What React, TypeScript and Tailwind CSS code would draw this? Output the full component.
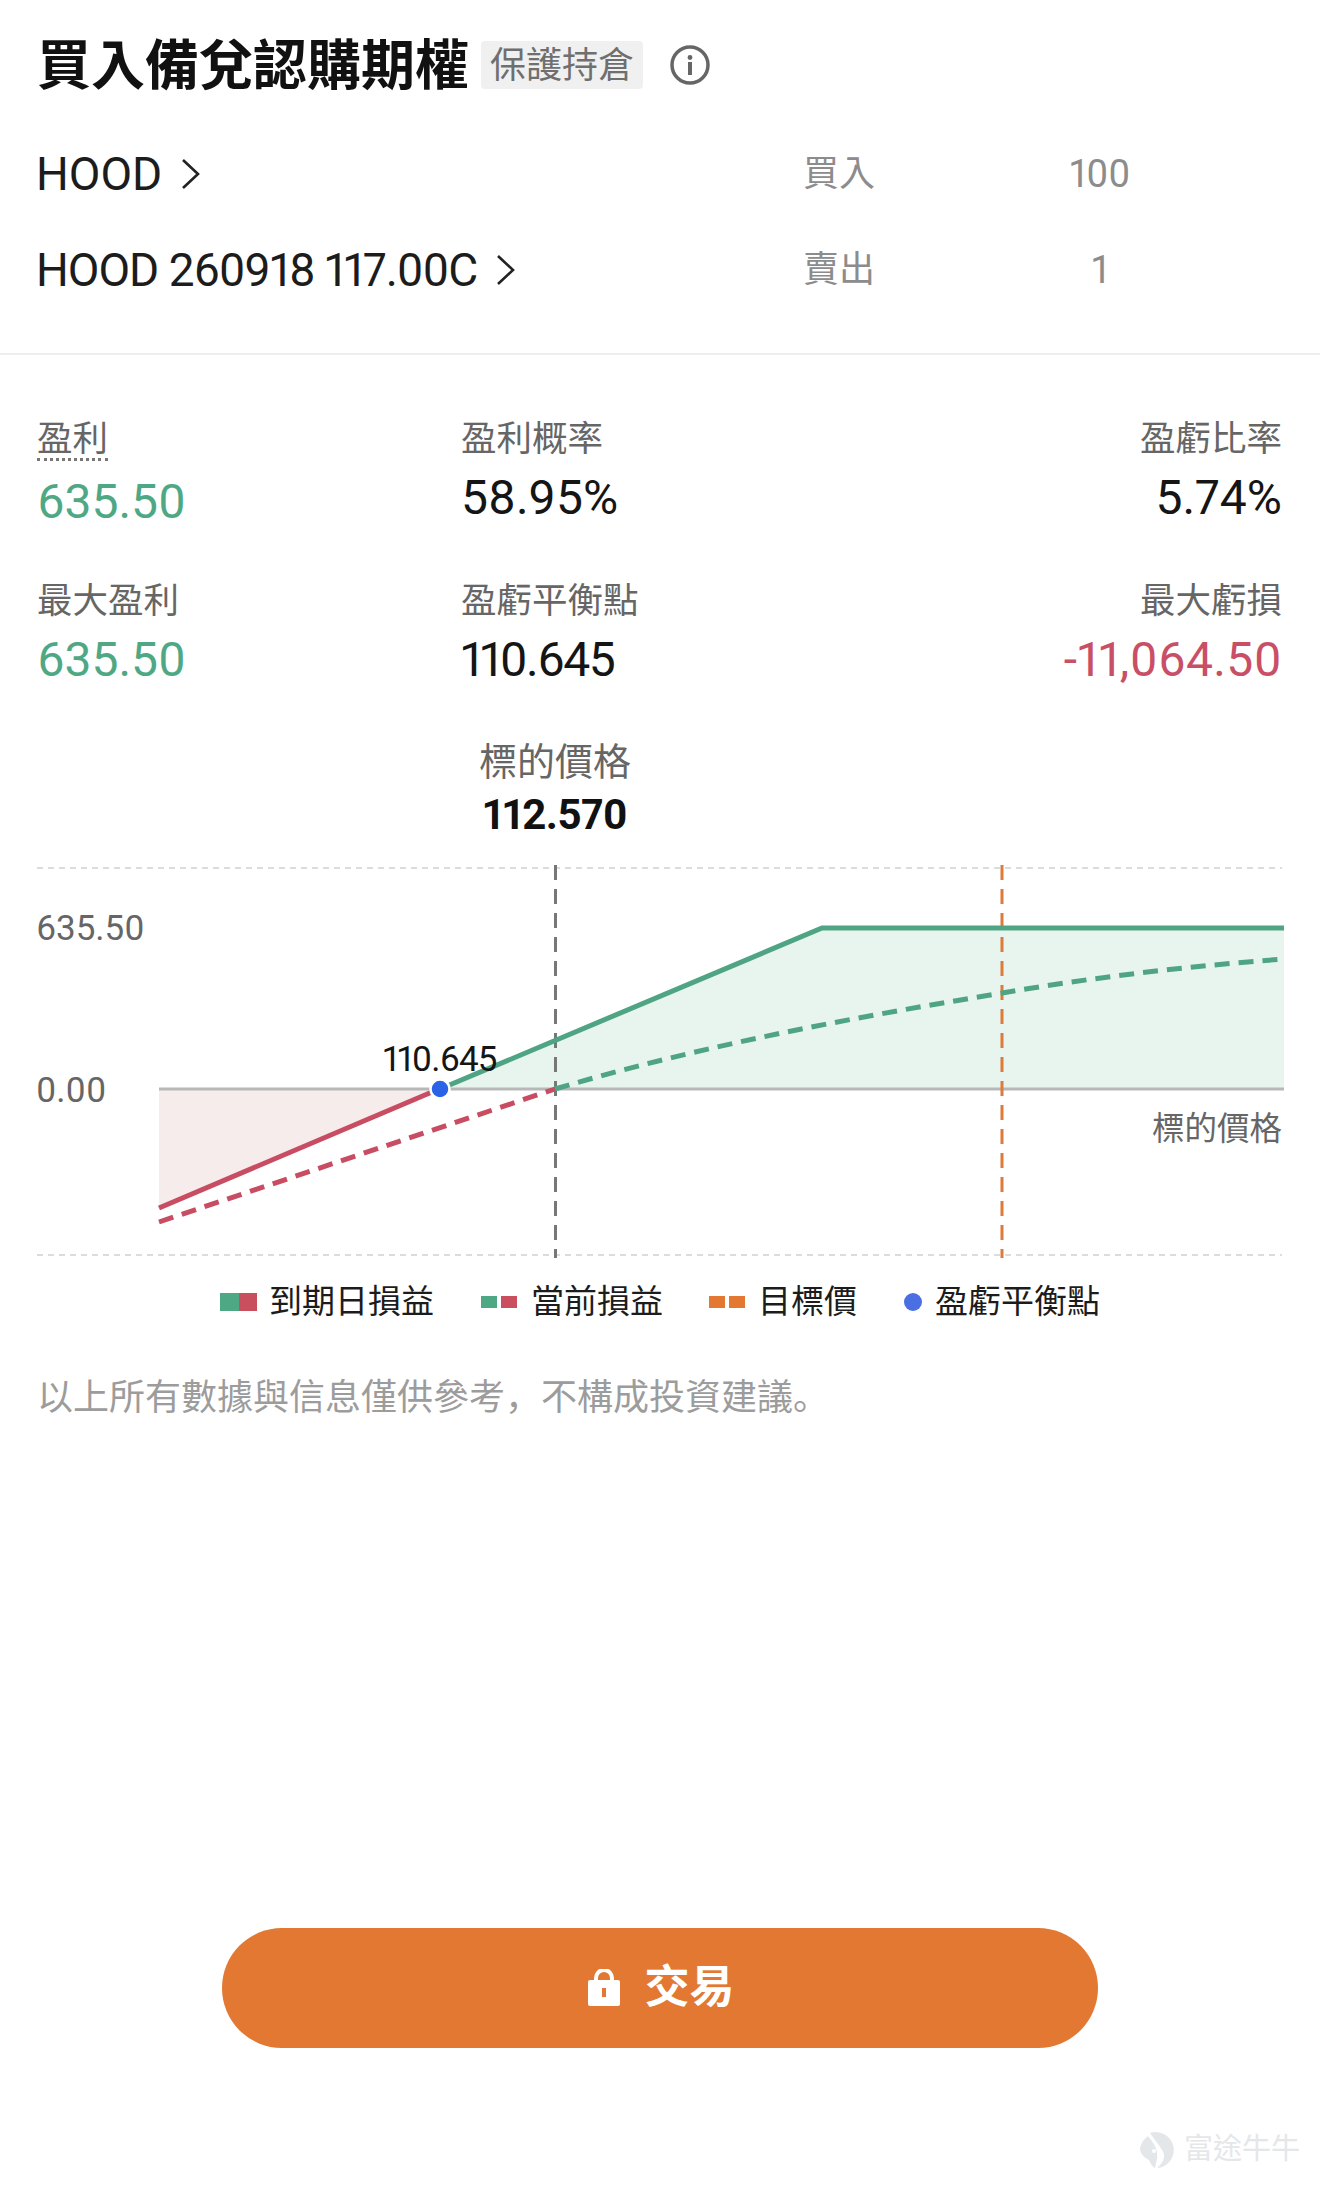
const FONT = "font-['Roboto','Noto_Sans_CJK_TC',sans-serif] proportional-nums";

function Chevron({ className }: { className: string }) {
  return (
    <svg viewBox="0 0 20 32" className={className} fill="none" stroke="#222" strokeWidth="2.6">
      <path d="M2 2l15 14L2 30" />
    </svg>
  );
}

function PositionRow({ name, side, qty, tight }: { name: string; side: string; qty: string; tight?: boolean }) {
  return (
    <div className="flex h-[48px] items-center">
      <div className="flex w-[766px] items-center">
        <span className={`-ml-px text-[46px] leading-[48px] text-[#1c1c1c] ${tight ? 'tracking-[-1px]' : ''}`}>{name}</span>
        <Chevron className="ml-[19px] h-[32px] w-[20px]" />
      </div>
      <span className="w-[200px] text-[36px] leading-[48px] text-[#8c8c8c]">{side}</span>
      <span className="w-[194px] text-center text-[38px] leading-[48px] text-[#8c8c8c]">{qty}</span>
    </div>
  );
}

interface StatProps {
  label: string;
  value: string;
  color?: string;
  align?: string;
  dotted?: boolean;
  gap?: string;
  tracking?: string;
}

function Stat({ label, value, color = 'text-[#151515]', align = 'text-left', dotted, gap = 'mt-[19px]', tracking = '' }: StatProps) {
  return (
    <div className={align}>
      <div className="h-[40px] text-[35.5px] leading-[40px] text-[#666]">
        {dotted ? (
          <span className="inline-block h-[42px] border-b-[3px] border-dotted border-[#777]">{label}</span>
        ) : (
          label
        )}
      </div>
      <div className={`${gap} h-[40px] text-[48px] leading-[40px] ${color} ${tracking}`}>{value}</div>
    </div>
  );
}

function Chart() {
  return (
    <div className="relative h-[400px]">
      <svg viewBox="0 860 1320 400" className="block h-[400px] w-[1320px]" fill="none">
        <path d="M159 1089H440L159 1208Z" fill="#f6ecec" />
        <path d="M440 1089L822 928H1284V1089Z" fill="#e8f5ef" />
        <path d="M37 868H1282M37 1255H1282" stroke="#dcdcdc" strokeWidth="2" strokeDasharray="6 5" />
        <path d="M159 1089H1284" stroke="#b8b8b8" strokeWidth="3" />
        <path d="M555.5 865V1258" stroke="#777" strokeWidth="3" strokeDasharray="15 9" />
        <path d="M1002 865V1258" stroke="#dd7b3a" strokeWidth="3" strokeDasharray="15 9" />
        <path d="M159 1208L432 1092" stroke="#c84d63" strokeWidth="5" />
        <path d="M159 1222L555 1089" stroke="#c84d63" strokeWidth="5" strokeDasharray="15 9" />
        <path d="M440 1089L822 928H1284" stroke="#4fa583" strokeWidth="5" />
        <path d="M555 1089C700 1046 850 1018 1002 993C1095 977 1190 966 1284 959" stroke="#4fa583" strokeWidth="5" strokeDasharray="15 9" />
        <circle cx="440" cy="1089" r="9.5" fill="#2a62e8" stroke="#fff" strokeWidth="2.5" />
      </svg>
      <span className="absolute left-[36px] top-[49px] text-[35px] leading-[40px] text-[#666]">635.50</span>
      <span className="absolute left-[36px] top-[211px] text-[35px] leading-[40px] text-[#666]">0.00</span>
      <span className="absolute left-[383px] top-[180px] text-[35px] leading-[40px] tracking-[-0.8px] text-[#151515]">110.645</span>
      <span className="absolute right-[38px] top-[249px] text-[32.5px] leading-[40px] text-[#666]">標的價格</span>
    </div>
  );
}

function LegendItem({ swatch, label, className }: { swatch: React.ReactNode; label: string; className: string }) {
  return (
    <div className={`flex items-center ${className}`}>
      {swatch}
      <span className="text-[33px] leading-[40px] text-[#1c1c1c]">{label}</span>
    </div>
  );
}

export default function App() {
  return (
    <div className={`relative h-[2186px] w-[1320px] overflow-hidden bg-white ${FONT}`}>
      <header className="border-b-2 border-[#eee] px-[37px] pb-[59px] pt-[39px]">
        <div className="mb-[59px] flex h-[52px] items-center">
          <h1 className="mt-[4px] text-[54px] font-bold leading-[52px] text-[#111]">買入備兌認購期權</h1>
          <span className="ml-[12px] flex h-[48px] w-[162px] items-center justify-center rounded-[4px] bg-[#f0f0f0] pt-[2px] text-[36px] leading-[48px] text-[#6f6f6f]">
            保護持倉
          </span>
          <svg viewBox="0 0 40 40" className="ml-[27px] h-[40px] w-[40px]" fill="none">
            <circle cx="20" cy="20" r="18" stroke="#666" strokeWidth="3.5" />
            <circle cx="20" cy="12.5" r="2.4" fill="#666" />
            <rect x="18" y="17" width="4" height="13" fill="#666" />
          </svg>
        </div>
        <PositionRow name="HOOD" side="買入" qty="100" />
        <div className="mt-[48px]">
          <PositionRow name="HOOD 260918 117.00C" side="賣出" qty="1" tight />
        </div>
      </header>

      <section className="mt-[64px] grid grid-cols-[424px_1fr_auto] gap-y-[59px] pl-[37px] pr-[38px]">
        <Stat label="盈利" value="635.50" color="text-[#4fa884]" dotted gap="mt-[23px]" />
        <Stat label="盈利概率" value="58.95%" />
        <Stat label="盈虧比率" value="5.74%" align="text-right" />
        <Stat label="最大盈利" value="635.50" color="text-[#4fa884]" />
        <Stat label="盈虧平衡點" value="110.645" tracking="tracking-[-1.5px]" />
        <Stat label="最大虧損" value="-11,064.50" color="text-[#c94f66]" align="text-right" tracking="tracking-[0.4px]" />
      </section>

      <div className="ml-[405px] mt-[60px] w-[300px] text-center">
        <div className="h-[44px] text-[38px] leading-[44px] text-[#666]">標的價格</div>
        <div className="mt-[9px] h-[44px] text-[42px] font-bold leading-[44px] tracking-[-0.5px] text-[#111]">112.570</div>
      </div>

      <div className="mt-[23px]">
        <Chart />
      </div>

      <div className="mt-[22px] flex h-[40px] items-center pl-[220px]">
        <LegendItem
          className="w-[261px]"
          label="到期日損益"
          swatch={
            <span className="mr-[12px] flex h-[18px] w-[37px]">
              <i className="w-1/2 bg-[#4fa884]" />
              <i className="w-1/2 bg-[#c94f5f]" />
            </span>
          }
        />
        <LegendItem
          className="w-[228px]"
          label="當前損益"
          swatch={
            <span className="mr-[14px] flex h-[12px] w-[36px] justify-between">
              <i className="w-[16px] bg-[#4fa884]" />
              <i className="w-[16px] bg-[#c94f5f]" />
            </span>
          }
        />
        <LegendItem
          className="w-[195px]"
          label="目標價"
          swatch={
            <span className="mr-[13px] flex h-[12px] w-[36px] justify-between">
              <i className="w-[16px] bg-[#e27831]" />
              <i className="w-[16px] bg-[#e27831]" />
            </span>
          }
        />
        <LegendItem
          className=""
          label="盈虧平衡點"
          swatch={<span className="mr-[13px] h-[18px] w-[18px] rounded-full bg-[#4a6fe3]" />}
        />
      </div>

      <p className="ml-[37px] mt-[52px] font-['Noto_Sans_CJK_SC',sans-serif] text-[36px] leading-[40px] text-[#9c9c9c]">
        {'以上所有數據與信息僅供參考\uFF0C不構成投資建議\u3002'}
      </p>

      <button className="ml-[222px] mt-[514px] flex h-[120px] w-[876px] items-center justify-center rounded-full bg-[#e27831] text-white">
        <svg viewBox="0 0 34 38" className="ml-[2px] h-[38px] w-[34px]" fill="none">
          <path d="M9 13V9a8 8 0 0 1 16 0v4" stroke="#fff" strokeWidth="4" />
          <path fillRule="evenodd" clipRule="evenodd" d="M3 11h28a2 2 0 0 1 2 2v22a2 2 0 0 1-2 2H3a2 2 0 0 1-2-2V13a2 2 0 0 1 2-2zm12 8v9h4v-9z" fill="#fff" />
        </svg>
        <span className="ml-[23px] text-[45px] font-bold leading-[50px]">交易</span>
      </button>

      {/* watermark */}
      <div className="absolute left-[1140px] top-[2130px] flex h-[40px] items-center">
        <svg viewBox="0 0 36 36" className="h-[36px] w-[36px]" fill="#e4e7e9">
          <path d="M10 1A18 18 0 1 1 17 36C24 30 26 24 22 18C19 13 14 7 10 1Z" />
          <path fillRule="evenodd" d="M8 4C12 9 16 14 17 20C18 26 16 31 15 36C12 35 10 30 9 28C5 26 0 22 0 16C1 11 4 7 8 4ZM14 17a2 2 0 1 0 0 4a2 2 0 1 0 0-4Z" />
        </svg>
        <span className="mb-[3px] ml-[8px] text-[29px] leading-[40px] text-[#e4e7e9]">富途牛牛</span>
      </div>
    </div>
  );
}
